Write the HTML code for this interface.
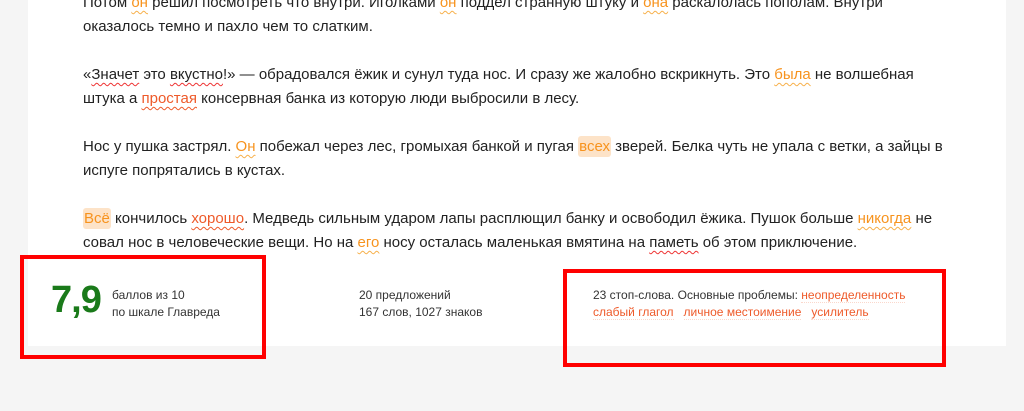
<!DOCTYPE html>
<html><head><meta charset="utf-8"><style>
body{margin:0;width:1024px;height:411px;background:#f5f5f5;position:relative;overflow:hidden;font-family:"Liberation Sans",Arial,sans-serif;}
.card{position:absolute;left:28px;top:0;width:978px;height:346px;background:#fff;}
.txt{position:absolute;left:83px;top:-9px;font-size:15px;line-height:24px;color:#222;white-space:nowrap;}
.txt p{margin:0 0 24px 0;}
.o{color:#f7931e;text-decoration:underline wavy #f7b04a;text-decoration-thickness:1px;text-underline-offset:3px;}
.r{color:#ee5a2a;text-decoration:underline wavy #ee5a2a;text-decoration-thickness:1px;text-underline-offset:3px;}
.w{text-decoration:underline wavy #e33;text-decoration-thickness:1px;text-underline-offset:3px;}
.h{color:#f7931e;background:#fde3c8;border-radius:3px;padding:2px 1px;}
.box{position:absolute;border:4px solid #f00;box-sizing:border-box;}
.score{position:absolute;left:51px;top:279px;font-size:38px;font-weight:bold;color:#1a7a1a;letter-spacing:-1px;}
.sm{position:absolute;font-size:12px;line-height:17px;color:#333;}
.pr{color:#ee5a2a;border-bottom:1px dotted #fbd8cc;}
</style></head><body>
<div class="card"></div>
<div class="txt">
<p>Потом <span class="o">он</span> решил посмотреть что внутри. Иголками <span class="o">он</span> поддел странную штуку и <span class="o">она</span> раскалолась пополам. Внутри<br>оказалось темно и пахло чем то слатким.</p>
<p>«<span class="w">Значет</span> это <span class="w">вкустно</span>!» — обрадовался ёжик и сунул туда нос. И сразу же жалобно вскрикнуть. Это <span class="o">была</span> не волшебная<br>штука а <span class="r">простая</span> консервная банка из которую люди выбросили в лесу.</p>
<p>Нос у пушка застрял. <span class="o">Он</span> побежал через лес, громыхая банкой и пугая <span class="h">всех</span> зверей. Белка чуть не упала с ветки, а зайцы в<br>испуге попрятались в кустах.</p>
<p><span class="h">Всё</span> кончилось <span class="r">хорошо</span>. Медведь сильным ударом лапы расплющил банку и освободил ёжика. Пушок больше <span class="o">никогда</span> не<br>совал нос в человеческие вещи. Но на <span class="o">его</span> носу осталась маленькая вмятина на <span class="w">паметь</span> об этом приключение.</p>
</div>
<div class="score">7,9</div>
<div class="sm" style="left:112px;top:287px">баллов из 10<br>по шкале Главреда</div>
<div class="sm" style="left:359px;top:287px">20 предложений<br>167 слов, 1027 знаков</div>
<div class="sm" style="left:593px;top:287px">23 стоп-слова. Основные проблемы: <span class="pr">неопределенность</span><br><span class="pr">слабый глагол</span> &nbsp; <span class="pr">личное местоимение</span> &nbsp; <span class="pr">усилитель</span></div>
<div class="box" style="left:20px;top:255px;width:246px;height:104px"></div>
<div class="box" style="left:563px;top:269px;width:383px;height:98px"></div>
</body></html>
